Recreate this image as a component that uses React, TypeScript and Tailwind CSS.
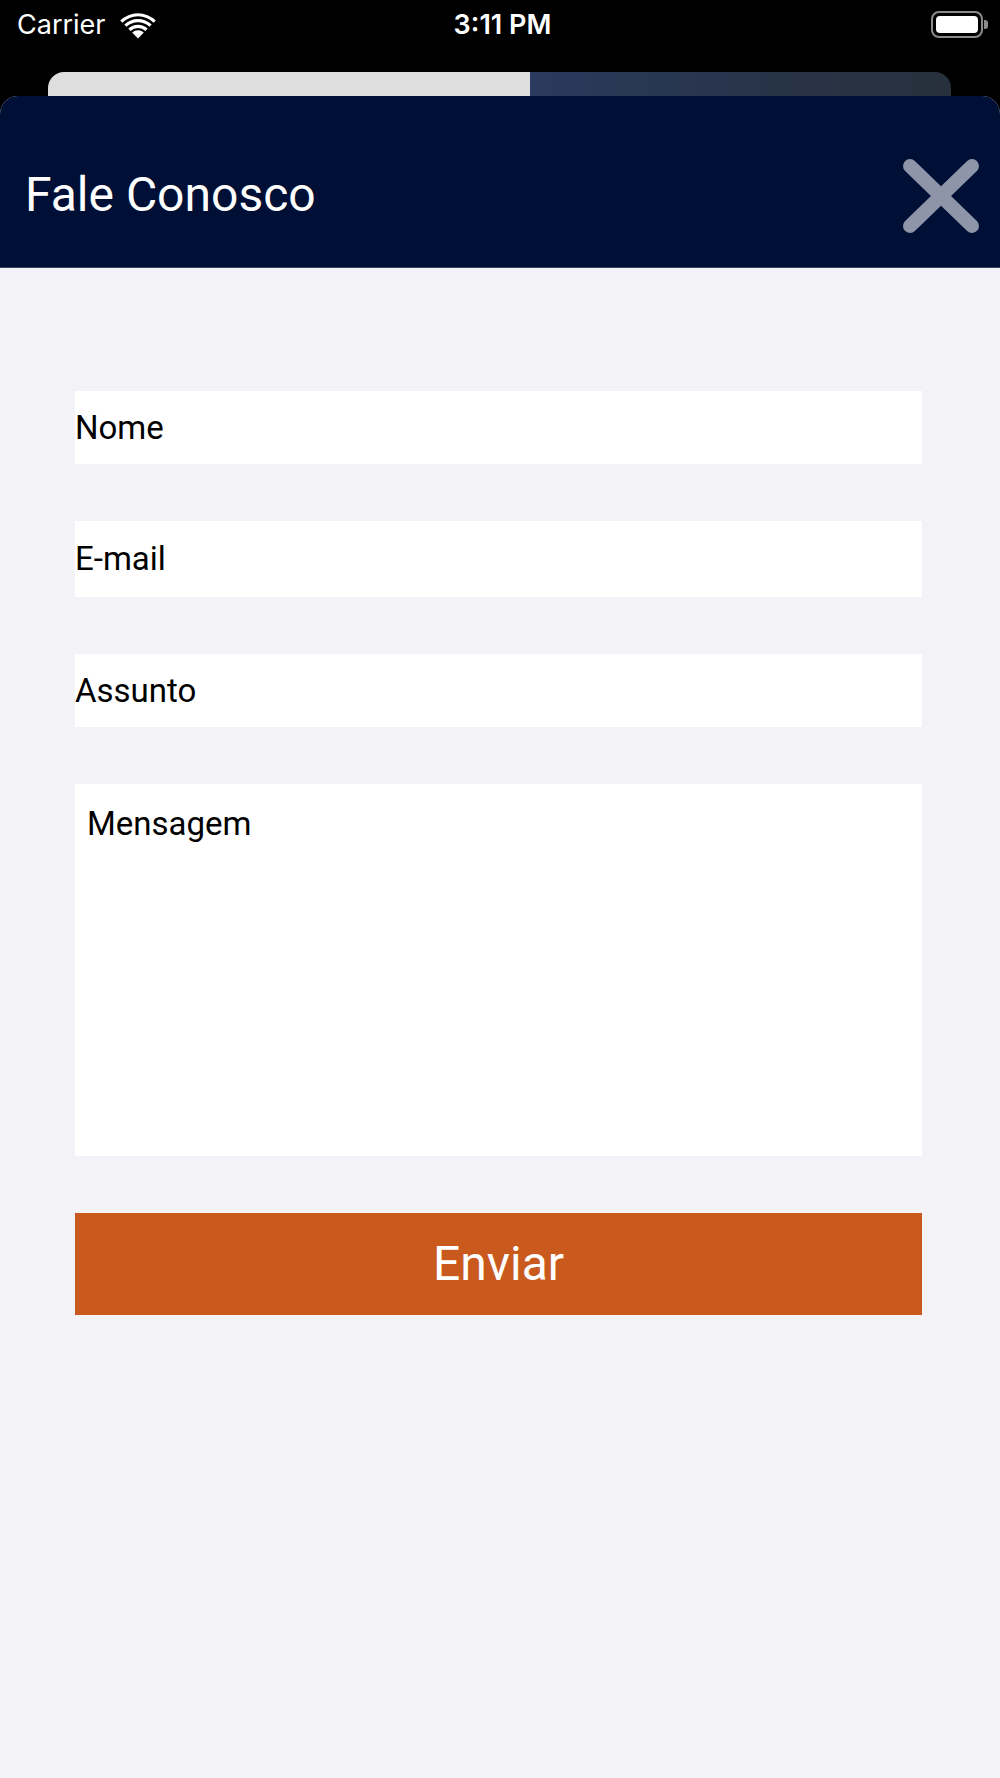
import React from "react";

function WifiIcon() {
  return (
    <svg width="40" height="28" viewBox="0 0 40 28" fill="white">
      <path d="M20 27.5 L14.2 21.6 A8.4 8.4 0 0 1 25.8 21.6 Z" />
      <path d="M10.3 17.6 A14 14 0 0 1 29.7 17.6 L27.4 19.9 A10.8 10.8 0 0 0 12.6 19.9 Z" />
      <path d="M6.3 13.6 A19.7 19.7 0 0 1 33.7 13.6 L31.5 15.8 A16.6 16.6 0 0 0 8.5 15.8 Z" />
      <path d="M2.2 9.5 A25.5 25.5 0 0 1 37.8 9.5 L35.6 11.7 A22.4 22.4 0 0 0 4.4 11.7 Z" />
    </svg>
  );
}

function Battery() {
  return (
    <div className="flex items-center">
      <div className="w-[52px] h-[27px] rounded-[8px] border-[2.5px] border-[#8a8a8a] p-[3px]">
        <div className="w-full h-full rounded-[4px] bg-white" />
      </div>
      <div className="w-[4px] h-[9px] rounded-r-[3px] bg-[#8a8a8a] ml-[1px]" />
    </div>
  );
}

function CloseIcon() {
  return (
    <svg width="80" height="76" viewBox="0 0 80 76">
      <g stroke="#8f95a8" strokeWidth="14" strokeLinecap="round">
        <line x1="9" y1="8" x2="71" y2="68" />
        <line x1="71" y1="8" x2="9" y2="68" />
      </g>
    </svg>
  );
}

const fields = [
  { label: "Nome", h: "h-[73px]" },
  { label: "E-mail", h: "h-[76px]" },
  { label: "Assunto", h: "h-[73px]" },
];

export default function App() {
  return (
    <div className="w-[1000px] h-[1778px] bg-black flex flex-col overflow-hidden">
      {/* Status bar */}
      <div className="h-[72px] grid grid-cols-3 items-start pt-[8px] pl-[17px] pr-[12px] text-white font-['Inter','Liberation_Sans',sans-serif]">
        <div className="flex items-center gap-[12px]">
          <span className="text-[27px] leading-[34px]">Carrier</span>
          <WifiIcon />
        </div>
        <div className="text-center text-[27px] leading-[34px] font-semibold">3:11 PM</div>
        <div className="flex justify-end pt-[3px]">
          <Battery />
        </div>
      </div>

      {/* Sheet behind */}
      <div className="ml-[48px] mr-[49px] h-[24px] rounded-t-[16px] overflow-hidden flex">
        <div className="w-[482px] bg-[#dedede]" />
        <div className="flex-1 bg-gradient-to-r from-[#2b3a5e] via-[#28344a] to-[#27303c]" />
      </div>

      {/* Modal sheet */}
      <div className="flex-1 rounded-t-[18px] overflow-hidden bg-[#f2f2f7] flex flex-col">
        <div className="h-[172px] bg-[#000f35] border-b border-[#3a4258] flex items-center justify-between pl-[25px] pr-[19px] pt-[28px]">
          <h1 className="text-white text-[48px] leading-none font-['Roboto',sans-serif] pb-[1px]">
            Fale Conosco
          </h1>
          <CloseIcon />
        </div>

        <div className="pl-[75px] pr-[78px] pt-[123px] flex flex-col gap-[57px] font-['Roboto',sans-serif]">
          {fields.map((f) => (
            <div key={f.label} className={`${f.h} bg-white flex items-center text-[33px] text-black`}>
              {f.label}
            </div>
          ))}
          <div className="h-[372px] bg-white pl-[12px] pt-[15px] text-[33px] text-black">
            Mensagem
          </div>
          <button className="h-[102px] bg-[#ca591d] text-white text-[48px] flex items-center justify-center">
            Enviar
          </button>
        </div>
      </div>
    </div>
  );
}
